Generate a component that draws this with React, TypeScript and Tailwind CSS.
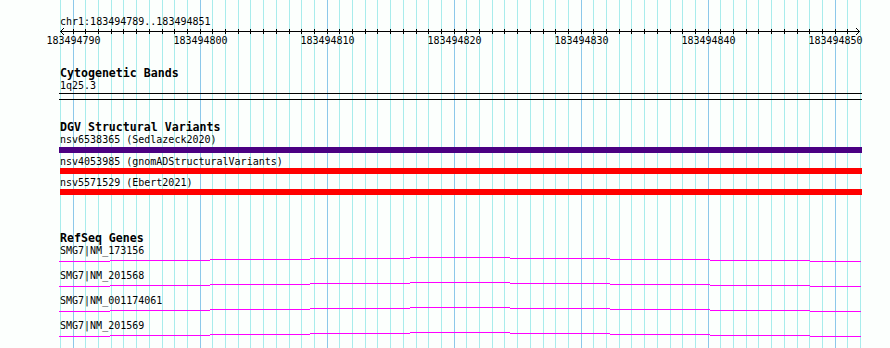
const PX_PER_BASE = 800 / 63;
const START = 183494789;

const gridX = (k: number) => Math.round(60 + k * PX_PER_BASE);

const bases = Array.from({ length: 64 }, (_, k) => k);
const majors = bases.filter((k) => (k - 1) % 10 === 0);

const variants = [
  { label: "nsv6538365 (Sedlazeck2020)", color: "bg-[#4b0082]", wide: true },
  { label: "nsv4053985 (gnomADStructuralVariants)", color: "bg-[#ff0000]", wide: false },
  { label: "nsv5571529 (Ebert2021)", color: "bg-[#ff0000]", wide: false },
];

const transcripts = ["SMG7|NM_173156", "SMG7|NM_201568", "SMG7|NM_001174061", "SMG7|NM_201569"];

// intron line drawn as a shallow hat, stepped every 100px
const segments = Array.from({ length: 9 }, (_, k) => {
  const x0 = k === 0 ? 59 : 10 + k * 100;
  const x1 = k === 8 ? 861 : 110 + k * 100;
  return { x: x0 - 59, w: x1 - x0, y: Math.abs(k - 4) };
});

function GridLines() {
  return (
    <div className="pointer-events-none absolute inset-0">
      {bases.map((k) => (
        <div
          key={k}
          className={`absolute top-0 bottom-0 w-px ${(k - 1) % 10 === 0 ? "bg-[#8cc8ea]" : "bg-[#a8ecec]"}`}
          style={{ left: gridX(k) }}
        />
      ))}
    </div>
  );
}

function Ruler() {
  return (
    <div className="pt-4">
      <div className="h-3 text-[10px] leading-3">
        chr1:{START}..{START + 62}
      </div>
      <svg width={802} height={7} className="block">
        <line x1={0} y1={3.5} x2={800} y2={3.5} stroke="#000" strokeWidth={1} />
        {bases.slice(1, 63).map((k) => (
          <line key={k} x1={gridX(k) - 60 + 0.5} y1={1} x2={gridX(k) - 60 + 0.5} y2={6} stroke="#000" strokeWidth={1} />
        ))}
        <polyline points="4,0 0.5,3.5 4,7" fill="none" stroke="#000" strokeWidth={1} />
        <polyline points="796,0 799.5,3.5 796,7" fill="none" stroke="#000" strokeWidth={1} />
      </svg>
      <div className="relative h-3 text-[10px] leading-3">
        {majors.map((k) => (
          <span key={k} className="absolute top-0 -translate-x-1/2" style={{ left: gridX(k) - 60 + 0.5 }}>
            {START + k}
          </span>
        ))}
      </div>
    </div>
  );
}

function TrackTitle({ children, className = "" }: { children: string; className?: string }) {
  return <div className={`h-[13px] text-[11.6px] font-bold leading-[13px] ${className}`}>{children}</div>;
}

export default function App() {
  return (
    <div
      className="relative h-[348px] w-[890px] overflow-hidden bg-[#fcfffd] text-black"
      style={{ fontFamily: '"DejaVu Sans Mono", "Liberation Mono", monospace' }}
    >
      <GridLines />
      <div className="relative ml-[60px] w-[802px]">
        <Ruler />

        <TrackTitle className="mt-5">Cytogenetic Bands</TrackTitle>
        <div className="h-3 text-[10px] leading-3">1q25.3</div>
        <div className="-ml-px mt-px h-px w-[803px] bg-black" />
        <div className="-ml-px mt-[5px] h-px w-[803px] bg-black" />

        <TrackTitle className="mt-[21px]">DGV Structural Variants</TrackTitle>
        {variants.map((v, i) => (
          <div key={v.label} className={i === 0 ? "" : "mt-[3px]"}>
            <div className="h-3 text-[10px] leading-3">{v.label}</div>
            <div className={`h-[6px] ${v.color} ${v.wide ? "-ml-px mt-px w-[803px]" : "w-[802px]"}`} />
          </div>
        ))}

        <TrackTitle className="mt-[37px]">RefSeq Genes</TrackTitle>
        {transcripts.map((t) => (
          <div key={t} className="pb-2">
            <div className="h-3 text-[10px] leading-3">{t}</div>
            <svg width={803} height={5} className="-ml-px block">
              {segments.map((s, i) => (
                <rect key={i} x={s.x} y={s.y} width={s.w} height={1} fill="#ff00ff" />
              ))}
            </svg>
          </div>
        ))}
      </div>
    </div>
  );
}
